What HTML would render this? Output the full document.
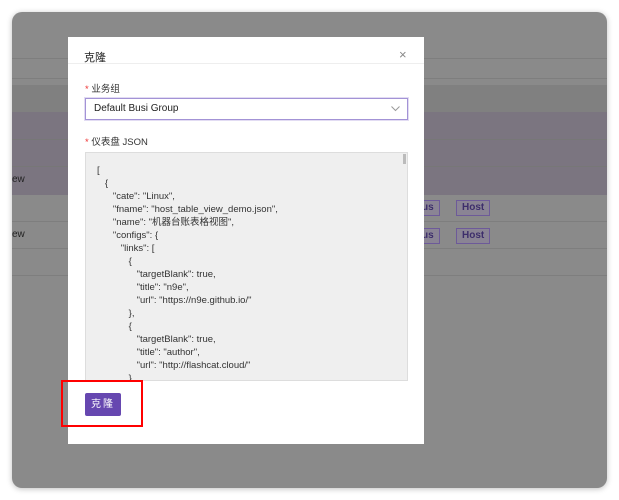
<!DOCTYPE html>
<html><head><meta charset="utf-8"><style>
*{margin:0;padding:0;box-sizing:border-box}
body{width:619px;height:500px;background:#fff;position:relative;overflow:hidden;font-family:"Liberation Sans","Noto Sans CJK SC",sans-serif}
.win{position:absolute;left:12px;top:12px;width:595px;height:476px;border-radius:10px;background:#8a8a8a;overflow:hidden;box-shadow:0 1px 6px rgba(0,0,0,.25)}
.abs{position:absolute}
.tag{position:absolute;height:16px;border:1px solid #6d5a99;background:#8a8494;color:#3d2e6b;font-size:10px;font-weight:bold;line-height:14px;padding:0 5px}
.modal{position:absolute;left:68px;top:37px;width:356px;height:407px;background:#fff}
.code{font-size:9.5px;color:#333;line-height:13px;white-space:pre;position:absolute;left:11px;top:11px}
</style></head><body>
<div class="win">
  <div class="abs" style="left:0;top:46px;width:595px;height:1px;background:#7e7e7e"></div>
  <div class="abs" style="left:0;top:66px;width:595px;height:1px;background:#7e7e7e"></div>
  <div class="abs" style="left:0;top:73px;width:595px;height:27px;background:#808080"></div>
  <div class="abs" style="left:0;top:100px;width:595px;height:83px;background:#7b7580"></div>
  <div class="abs" style="left:0;top:127px;width:595px;height:1px;background:#777"></div>
  <div class="abs" style="left:0;top:154px;width:595px;height:1px;background:#777"></div>
  <div class="abs" style="left:0;top:209px;width:595px;height:1px;background:#7e7e7e"></div>
  <div class="abs" style="left:0;top:236px;width:595px;height:1px;background:#7e7e7e"></div>
  <div class="abs" style="left:0;top:263px;width:595px;height:1px;background:#7e7e7e"></div>
  <div class="abs" style="left:0;top:162px;font-size:10px;color:#222">ew</div>
  <div class="abs" style="left:0;top:217px;font-size:10px;color:#222">ew</div>
  <div class="tag" style="left:404px;top:188px">us</div>
  <div class="tag" style="left:444px;top:188px">Host</div>
  <div class="tag" style="left:404px;top:216px">us</div>
  <div class="tag" style="left:444px;top:216px">Host</div>
</div>
<div class="modal">
  <div class="abs" style="left:16px;top:12px;font-size:11px;color:#222">克隆</div>
  <div class="abs" style="left:331px;top:10px;font-size:13px;color:#888">×</div>
  <div class="abs" style="left:0;top:26px;width:356px;height:1px;background:#eee"></div>
  <div class="abs" style="left:17px;top:44px;font-size:9.5px;color:#333"><span style="color:#e33">*</span> 业务组</div>
  <div class="abs" style="left:17px;top:61px;width:323px;height:22px;border:1px solid #a393d6;box-shadow:0 0 0 1px #e2dcf3;font-size:10px;line-height:20px;padding-left:8px;color:#222">Default Busi Group
    <svg style="position:absolute;right:7px;top:7px" width="9" height="6"><path d="M0.5 0.5L4.5 4.5L8.5 0.5" stroke="#999" fill="none"/></svg></div>
  <div class="abs" style="left:17px;top:97px;font-size:9.5px;color:#333"><span style="color:#e33">*</span> 仪表盘 JSON</div>
  <div class="abs" style="left:17px;top:115px;width:323px;height:229px;background:#efefef;border:1px solid #ddd;overflow:hidden">
    <div class="abs" style="right:1px;top:1px;width:3px;height:10px;background:#bbb"></div>
<div class="code">[
   {
      "cate": "Linux",
      "fname": "host_table_view_demo.json",
      "name": "机器台账表格视图",
      "configs": {
         "links": [
            {
               "targetBlank": true,
               "title": "n9e",
               "url": "https://n9e.github.io/"
            },
            {
               "targetBlank": true,
               "title": "author",
               "url": "http://flashcat.cloud/"
            }</div>
  </div>
  <div class="abs" style="left:17px;top:356px;width:36px;height:23px;background:#6647b0;border-radius:2px;color:#fff;font-size:10px;text-align:center;line-height:23px;letter-spacing:2px">克隆</div>
</div>
<div class="abs" style="left:61px;top:380px;width:82px;height:47px;border:2px solid #f00"></div>
</body></html>
